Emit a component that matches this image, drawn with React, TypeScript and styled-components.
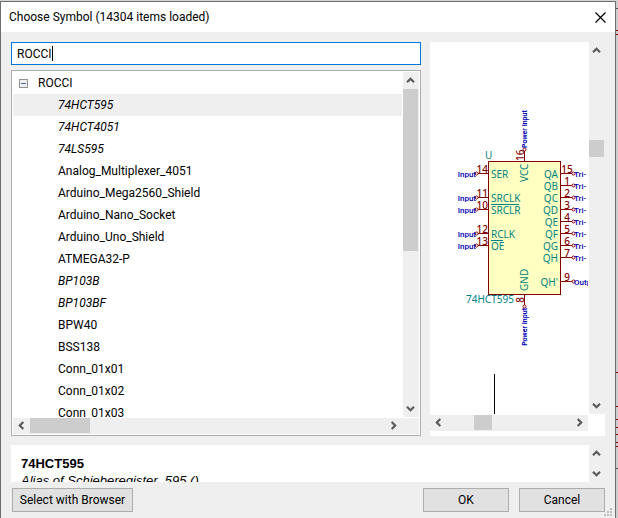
import React, { useState } from "react";
import styled, { createGlobalStyle, css } from "styled-components";

const Global = createGlobalStyle`
  * { box-sizing: border-box; }
  html, body, #root { height: 100%; margin: 0; }
  body { overflow: hidden; background: #cfcfcf; }
  body, button, input { font-family: Roboto, "Segoe UI", sans-serif; font-size: 12px; color: #000; }
`;

const Desktop = styled.div`
  display: flex;
  height: 100vh;
  padding-top: 1px;
  background: #d4d4d4;
`;

const Dialog = styled.main`
  flex: 1;
  min-width: 0;
  display: flex;
  flex-direction: column;
  position: relative;
  background: #efefef;
  border: 1px solid #6e6e6e;
  border-bottom: 0;
`;

const Backdrop = styled.svg`
  flex: none;
  width: 2px;
  height: 100%;
  background: #cdcdcd;
`;

const TitleBar = styled.header`
  flex: none;
  display: flex;
  align-items: center;
  justify-content: space-between;
  height: 30px;
  padding-left: 8px;
  background: #fff;
`;

const Title = styled.h1`
  margin: 0;
  font-size: 12px;
  font-weight: 400;
  white-space: nowrap;
`;

const CloseButton = styled.button`
  display: flex;
  align-items: center;
  justify-content: center;
  width: 30px;
  height: 28px;
  padding: 0;
  border: 0;
  background: none;
`;

const Panes = styled.div`
  flex: 1;
  min-height: 0;
  display: flex;
  gap: 9px;
  padding: 10px 10px 0;
`;

const LeftPane = styled.section`
  flex: 1;
  min-width: 0;
  display: flex;
  flex-direction: column;
  gap: 5px;
`;

const SearchField = styled.label`
  flex: none;
  display: flex;
  align-items: center;
  height: 23px;
  padding-left: 5px;
  border: 1px solid #0078d7;
  background: #fff;
  cursor: text;
`;

const SearchInput = styled.input`
  field-sizing: content;
  min-width: 1px;
  height: 19px;
  padding: 0;
  border: 0;
  outline: 0;
  background: none;
  caret-color: transparent;
`;

const Caret = styled.span`
  width: 1px;
  height: 15px;
  background: #000;
`;

const TreePanel = styled.div`
  flex: 1;
  min-height: 0;
  display: flex;
  flex-direction: column;
  gap: 1px;
  padding: 1px;
  border: 1px solid #abadb3;
  background: #fff;
`;

const TreeFoot = styled.div`
  padding-right: 17px;
  background: #efefef;
`;

const Split = styled.div`
  flex: 1;
  min-height: 0;
  display: flex;
  gap: 1px;
`;

const Tree = styled.ul`
  flex: 1;
  min-width: 0;
  margin: 0;
  padding: 0;
  overflow: hidden;
  list-style: none;
`;

const TreeRow = styled.li<{ $root?: boolean; $alias?: boolean; $selected?: boolean }>`
  display: flex;
  align-items: center;
  gap: 10px;
  height: 22px;
  padding-left: ${(p) => (p.$root ? 6 : 45)}px;
  font-style: ${(p) => (p.$alias ? "italic" : "normal")};
  background: ${(p) => (p.$selected ? "#efefef" : "transparent")};
  white-space: nowrap;
`;

const Expander = styled.button`
  display: flex;
  width: 9px;
  height: 9px;
  padding: 0;
  border: 0;
  background: none;
`;

const Bar = styled.div<{ $dir: "v" | "h" }>`
  flex: none;
  display: flex;
  align-items: flex-start;
  background: #efefef;
  ${(p) =>
    p.$dir === "v"
      ? css`flex-direction: column; width: 16px;`
      : css`height: 16px;`}
`;

const Arrow = styled.button<{ $dir: "v" | "h" }>`
  flex: none;
  display: flex;
  align-items: center;
  justify-content: center;
  width: ${(p) => (p.$dir === "v" ? 15 : 17)}px;
  height: ${(p) => (p.$dir === "v" ? 17 : 15)}px;
  padding: 0;
  border: 0;
  background: none;
`;

const Track = styled.div<{ $dir: "v" | "h" }>`
  flex: 1;
  min-height: 0;
  min-width: 0;
  display: flex;
  flex-direction: ${(p) => (p.$dir === "v" ? "column" : "row")};
`;

const Thumb = styled.div<{ $dir: "v" | "h" }>`
  background: #cdcdcd;
  ${(p) => (p.$dir === "v" ? css`width: 15px;` : css`height: 15px;`)}
`;

const PreviewPane = styled.section`
  flex: none;
  width: 175px;
  display: flex;
  flex-direction: column;
  gap: 1px;
  padding-bottom: 5px;
  background: #fff;
`;

const PreviewFoot = styled.div`
  padding-right: 17px;
`;

const Canvas = styled.svg`
  flex: 1;
  min-width: 0;
  height: 100%;
  font-family: "Noto Sans", sans-serif;
  font-size: 10px;
`;

const PinNumber = styled.text`
  font-weight: 500;
  fill: #840000;
`;

const PinType = styled.text<{ $vertical?: boolean }>`
  font-family: Roboto, sans-serif;
  font-size: ${(p) => (p.$vertical ? 7 : 8)}px;
  font-weight: ${(p) => (p.$vertical ? 700 : 500)};
  fill: #0000b4;
`;

const Details = styled.section`
  flex: none;
  display: flex;
  height: 37px;
  margin: 9px 10px 0;
`;

const DetailsText = styled.div`
  flex: 1;
  min-width: 0;
  overflow: hidden;
  padding: 10px 10px 0;
  background: #fff;
  font-family: "Liberation Sans", Arial, sans-serif;
  font-size: 13px;
  line-height: 17px;
`;

const Name = styled.strong`
  display: block;
`;

const Alias = styled.em`
  display: block;
`;

const DetailsBar = styled.div`
  flex: none;
  display: flex;
  flex-direction: column;
  justify-content: space-between;
  width: 16px;
`;

const Footer = styled.footer`
  flex: none;
  display: flex;
  align-items: center;
  gap: 10px;
  padding: 6px 10px;
`;

const PushButton = styled.button<{ $wide?: boolean }>`
  width: ${(p) => (p.$wide ? 121 : 86)}px;
  height: 24px;
  margin-left: ${(p) => (p.$wide ? 1 : 0)}px;
  margin-right: ${(p) => (p.$wide ? "auto" : 0)};
  padding: 0;
  border: 1px solid #adadad;
  background: #e1e1e1;
  white-space: nowrap;
`;

const Grip = styled.svg`
  position: absolute;
  right: 3px;
  bottom: 2px;
`;

const turns = { up: 0, right: 90, down: 180, left: 270 };

function Chevron({ to }: { to: keyof typeof turns }) {
  return (
    <svg width="9" height="9" viewBox="0 0 9 9" aria-hidden="true">
      <path
        d="M1 6.3 4.5 2.8 8 6.3"
        fill="none"
        stroke="#5a5a5a"
        strokeWidth="2.2"
        transform={`rotate(${turns[to]} 4.5 4.5)`}
      />
    </svg>
  );
}

function ScrollBar({ dir, start, size }: { dir: "v" | "h"; start: number; size: number }) {
  return (
    <Bar $dir={dir}>
      <Arrow $dir={dir} aria-label={dir === "v" ? "Scroll up" : "Scroll left"}>
        <Chevron to={dir === "v" ? "up" : "left"} />
      </Arrow>
      <Track $dir={dir}>
        <div style={{ flexBasis: `${start}%` }} />
        <Thumb $dir={dir} style={{ flexBasis: `${size}%` }} />
      </Track>
      <Arrow $dir={dir} aria-label={dir === "v" ? "Scroll down" : "Scroll right"}>
        <Chevron to={dir === "v" ? "down" : "right"} />
      </Arrow>
    </Bar>
  );
}

const symbols: { name: string; alias?: boolean }[] = [
  { name: "74HCT595", alias: true },
  { name: "74HCT4051", alias: true },
  { name: "74LS595", alias: true },
  { name: "Analog_Multiplexer_4051" },
  { name: "Arduino_Mega2560_Shield" },
  { name: "Arduino_Nano_Socket" },
  { name: "Arduino_Uno_Shield" },
  { name: "ATMEGA32-P" },
  { name: "BP103B", alias: true },
  { name: "BP103BF", alias: true },
  { name: "BPW40" },
  { name: "BSS138" },
  { name: "Conn_01x01" },
  { name: "Conn_01x02" },
  { name: "Conn_01x03" },
];

const leftPins = [
  { num: "14", name: "SER", y: 132 },
  { num: "11", name: "SRCLK", y: 156 },
  { num: "10", name: "SRCLR", y: 168, bar: 28 },
  { num: "12", name: "RCLK", y: 192 },
  { num: "13", name: "OE", y: 204, bar: 12 },
];

const rightPins = [
  { num: "15", name: "QA", y: 132 },
  { num: "1", name: "QB", y: 144 },
  { num: "2", name: "QC", y: 156 },
  { num: "3", name: "QD", y: 168 },
  { num: "4", name: "QE", y: 180 },
  { num: "5", name: "QF", y: 192 },
  { num: "6", name: "QG", y: 204 },
  { num: "7", name: "QH", y: 216 },
  { num: "9", name: "QH'", y: 240, type: "Outp" },
];

const RED = "#840000";
const TEAL = "#008484";

function SymbolPreview() {
  return (
    <Canvas viewBox="0 0 159 372" preserveAspectRatio="xMinYMin slice" role="img" aria-label="74HCT595">
      <rect x="58.5" y="119.5" width="72" height="133" fill="#ffffc2" stroke={RED} />
      {leftPins.map((p) => (
        <g key={p.num}>
          <circle cx="46.5" cy={p.y - 0.5} r="1.5" fill="none" stroke={RED} />
          <path d={`M48 ${p.y - 0.5}H58`} stroke={RED} />
          <PinNumber x="58" y={p.y - 1} textAnchor="end">{p.num}</PinNumber>
          <text x="61" y={p.y + 4} fill={TEAL}>{p.name}</text>
          {p.bar && <path d={`M61 ${p.y - 5.5}h${p.bar}`} stroke={TEAL} />}
          <PinType x="46" y={p.y + 3} textAnchor="end">Input</PinType>
        </g>
      ))}
      {rightPins.map((p) => (
        <g key={p.num}>
          <path d={`M131 ${p.y - 0.5}H142`} stroke={RED} />
          <circle cx="143.5" cy={p.y - 0.5} r="1.5" fill="none" stroke={RED} />
          <PinNumber x="137" y={p.y - 1} textAnchor="middle">{p.num}</PinNumber>
          <text x="128" y={p.y + 4} textAnchor="end" fill={TEAL}>{p.name}</text>
          <PinType x="144" y={p.y + 3}>{p.type ?? "Tri-"}</PinType>
        </g>
      ))}
      <path d="M94.5 109V119M94.5 253V263" stroke={RED} />
      <circle cx="94.5" cy="107.5" r="1.5" fill="none" stroke={RED} />
      <circle cx="94.5" cy="264.5" r="1.5" fill="none" stroke={RED} />
      <PinNumber transform="translate(94 119) rotate(-90)">16</PinNumber>
      <PinNumber transform="translate(94 258) rotate(-90)" textAnchor="middle">8</PinNumber>
      <text transform="translate(98 140) rotate(-90)" fill={TEAL}>VCC</text>
      <text transform="translate(98 249) rotate(-90)" fill={TEAL}>GND</text>
      <PinType $vertical transform="translate(97 106) rotate(-90)">Power Input</PinType>
      <PinType $vertical transform="translate(97 266) rotate(-90)" textAnchor="end">Power Input</PinType>
      <text x="55" y="117" fill={TEAL}>U</text>
      <text x="36" y="261" fill={TEAL}>74HCT595</text>
      <path d="M64.5 332V372" stroke="#000" />
    </Canvas>
  );
}

export default function App() {
  const [filter, setFilter] = useState("ROCCI");
  const [selected, setSelected] = useState("74HCT595");
  return (
    <>
      <Global />
      <Desktop>
        <Dialog>
          <TitleBar>
            <Title>Choose Symbol (14304 items loaded)</Title>
            <CloseButton aria-label="Close">
              <svg width="11" height="11" viewBox="0 0 11 11">
                <path d="M.5.5l10 10M10.5.5l-10 10" stroke="#000" strokeWidth="1.2" />
              </svg>
            </CloseButton>
          </TitleBar>
          <Panes>
            <LeftPane>
              <SearchField>
                <SearchInput aria-label="Filter" value={filter} onChange={(e) => setFilter(e.target.value)} />
                <Caret />
              </SearchField>
              <TreePanel>
                <Split>
                  <Tree>
                    <TreeRow $root>
                      <Expander aria-label="Collapse ROCCI">
                        <svg width="9" height="9" viewBox="0 0 9 9">
                          <rect x=".5" y=".5" width="8" height="8" fill="#f0f0f0" stroke="#919191" />
                          <path d="M2 4.5h5" stroke="#4b63a7" />
                        </svg>
                      </Expander>
                      ROCCI
                    </TreeRow>
                    {symbols.map((s) => (
                      <TreeRow
                        key={s.name}
                        $alias={s.alias}
                        $selected={s.name === selected}
                        onClick={() => setSelected(s.name)}
                      >
                        {s.name}
                      </TreeRow>
                    ))}
                  </Tree>
                  <ScrollBar dir="v" start={0} size={52} />
                </Split>
                <TreeFoot>
                  <ScrollBar dir="h" start={0} size={17} />
                </TreeFoot>
              </TreePanel>
            </LeftPane>
            <PreviewPane>
              <Split>
                <SymbolPreview />
                <ScrollBar dir="v" start={24} size={5} />
              </Split>
              <PreviewFoot>
                <ScrollBar dir="h" start={22} size={14} />
              </PreviewFoot>
            </PreviewPane>
          </Panes>
          <Details>
            <DetailsText>
              <Name>74HCT595</Name>
              <Alias>Alias of Schieberegister_595 ()</Alias>
            </DetailsText>
            <DetailsBar>
              <Arrow $dir="v" aria-label="Scroll details up"><Chevron to="up" /></Arrow>
              <Arrow $dir="v" aria-label="Scroll details down"><Chevron to="down" /></Arrow>
            </DetailsBar>
          </Details>
          <Footer>
            <PushButton $wide>Select with Browser</PushButton>
            <PushButton>OK</PushButton>
            <PushButton>Cancel</PushButton>
          </Footer>
          <Grip width="8" height="8" viewBox="0 0 8 8" fill="#bcbcbc">
            <path d="M6 0h2v2h-2zM3 3h2v2h-2zM6 3h2v2h-2zM0 6h2v2h-2zM3 6h2v2h-2zM6 6h2v2h-2z" />
          </Grip>
        </Dialog>
        <Backdrop viewBox="0 0 2 517" preserveAspectRatio="xMinYMin slice">
          <path d="M0 29.5h2M0 33.5h2M0 371.5h2M0 405.5h2M0 418.5h2M0 426.5h2M0 433.5h2M0 441.5h2M0 445.5h2" stroke={RED} />
          <path d="M0 7.5h2M0 467.5h2" stroke="#555" />
        </Backdrop>
      </Desktop>
    </>
  );
}
